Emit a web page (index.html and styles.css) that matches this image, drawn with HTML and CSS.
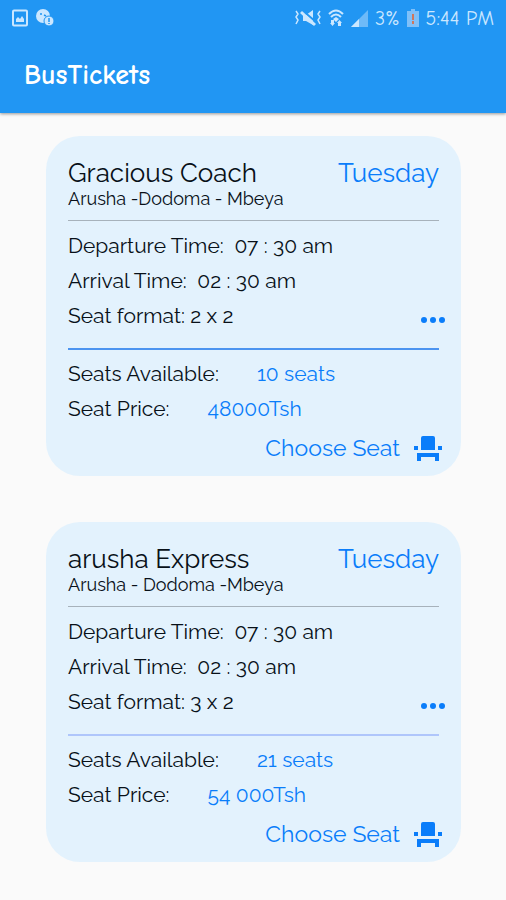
FILE: index.html
```html
<!DOCTYPE html>
<html lang="en">
<head>
<meta charset="utf-8">
<meta name="viewport" content="width=device-width, initial-scale=1">
<title>BusTickets</title>
<link rel="stylesheet" href="styles.css">
</head>
<body>
<svg width="0" height="0" class="sprite" aria-hidden="true">
  <symbol id="seat" viewBox="0 0 28 25">
    <path d="M7 2a2 2 0 0 1 2-2h10a2 2 0 0 1 2 2v12H7zM0 10h4v4H0zM24 10h4v4h-4zM3 17h22v8h-4v-4H7v4H3z"/>
  </symbol>
  <symbol id="dots" viewBox="0 0 24 6">
    <circle cx="3" cy="3" r="3"/><circle cx="12" cy="3" r="3"/><circle cx="21" cy="3" r="3"/>
  </symbol>
</svg>
<header class="app-header">
  <div class="status">
    <svg width="16" height="18" viewBox="0 0 16 18" aria-hidden="true">
      <rect x="1" y="1.500" width="14" height="15" rx="1" fill="none" stroke="currentColor" stroke-width="2"/>
      <path d="M4 13V10l2-2 2 2 2-3 2 3v3z" fill="currentColor"/>
    </svg>
    <svg width="18" height="18" viewBox="0 0 18 18" aria-hidden="true">
      <circle cx="7" cy="7" r="7" fill="currentColor"/>
      <path d="M4 5h2M8 6l2 1" stroke="#2196f3" stroke-width="1.500"/>
      <circle cx="13" cy="12" r="5" fill="currentColor" stroke="#2196f3"/>
      <path d="M13 9v4M13 14v1" stroke="#2196f3" stroke-width="1.500"/>
    </svg>
    <div class="status-right">
      <svg width="26" height="18" viewBox="0 0 26 18" aria-hidden="true">
        <path d="M8 6h3l7-5v15l-7-4H8z" fill="currentColor"/>
        <path d="M7 1l14 12" stroke="#2196f3" stroke-width="2"/>
        <path d="M6 3l14 13" stroke="currentColor" stroke-width="3"/>
        <path d="M1 2l2 3-2 3 2 3-2 4M25 2l-2 3 2 3-2 3 2 4" fill="none" stroke="currentColor" stroke-width="1.500"/>
      </svg>
      <svg width="16" height="18" viewBox="0 0 16 18" aria-hidden="true">
        <path d="M1 5q7-7 14 0M3 8q5-5 10 0" fill="none" stroke="currentColor" stroke-width="2"/>
        <path d="M8 8l3 2-3 3-3-3zM3 11h3v3h1l-2.500 3L2 14h1zM10 17v-3H9l2.500-3 2.500 3h-1v3z" fill="currentColor"/>
      </svg>
      <svg width="17" height="17" viewBox="0 0 17 17" aria-hidden="true">
        <path d="M0 17L17 0v17z" fill="currentColor" opacity=".45"/><path d="M0 17l8-8v8z" fill="currentColor"/>
      </svg>
      <span>3%</span>
      <svg width="12" height="18" viewBox="0 0 12 18" aria-hidden="true">
        <path d="M4 0h4v2h4v16H0V2h4z" fill="#80c0f8"/><path d="M6 5v6M6 12v3" stroke="#d0765c" stroke-width="2"/>
      </svg>
      <span>5:44 PM</span>
    </div>
  </div>
  <h1>BusTickets</h1>
</header>
<main>
  <article class="card">
    <div class="heading"><h2>Gracious Coach</h2><span class="day">Tuesday</span></div>
    <p class="route">Arusha -Dodoma - Mbeya</p>
    <div class="schedule">
      <p>Departure Time:&nbsp; 07 : 30 am</p>
      <p>Arrival Time:&nbsp; 02 : 30 am</p>
      <p>Seat format: 2 x 2</p>
      <button class="more" type="button" aria-label="More"><svg width="24" height="6"><use href="#dots"/></svg></button>
    </div>
    <dl>
      <div><dt>Seats Available:</dt><dd>10 seats</dd></div>
      <div><dt>Seat Price:</dt><dd>48000Tsh</dd></div>
    </dl>
    <button class="choose" type="button">Choose Seat <svg width="28" height="25" aria-hidden="true"><use href="#seat"/></svg></button>
  </article>
  <article class="card card-soft">
    <div class="heading"><h2>arusha Express</h2><span class="day">Tuesday</span></div>
    <p class="route">Arusha - Dodoma -Mbeya</p>
    <div class="schedule">
      <p>Departure Time:&nbsp; 07 : 30 am</p>
      <p>Arrival Time:&nbsp; 02 : 30 am</p>
      <p>Seat format: 3 x 2</p>
      <button class="more" type="button" aria-label="More"><svg width="24" height="6"><use href="#dots"/></svg></button>
    </div>
    <dl>
      <div><dt>Seats Available:</dt><dd>21 seats</dd></div>
      <div><dt>Seat Price:</dt><dd>54 000Tsh</dd></div>
    </dl>
    <button class="choose" type="button">Choose Seat <svg width="28" height="25" aria-hidden="true"><use href="#seat"/></svg></button>
  </article>
</main>
</body>
</html>
```
FILE: styles.css
```css
* { box-sizing: border-box; }
body {
  margin: 0;
  background: #fafafa;
  color: #081018;
  font-family: Raleway, Lato, sans-serif;
  font-size: 21px;
  line-height: 35px;
}
h1, h2, p, dl, dd { margin: 0; }
.sprite { position: absolute; }
.app-header {
  background: #2196f3;
  color: #fff;
  box-shadow: 0 1px 3px rgba(0, 0, 0, .4);
  padding-bottom: 8px;
}
.status {
  display: flex;
  align-items: center;
  gap: 8px;
  height: 36px;
  padding: 0 12px;
  color: #cbe7ff;
  font-family: "Comic Neue", Lato, sans-serif;
  font-size: 20px;
}
.status-right { display: flex; align-items: center; gap: 7px; margin-left: auto; }
h1 {
  padding: 10px 24px 0;
  font-family: "Comic Neue", Lato, sans-serif;
  font-size: 28px;
  font-weight: 700;
  line-height: 59px;
}
main { display: grid; gap: 46px; padding: 23px 45px 38px 46px; }
.card { background: #e3f2fd; border-radius: 34px; padding: 20px 22px 6px; }
.heading { display: flex; justify-content: space-between; line-height: 34px; }
h2, .day { font-size: 26px; font-weight: 400; }
.day, dd, .choose, .more { color: #0a7dfa; }
.route { font-size: 18px; line-height: 18px; padding-bottom: 12px; }
.schedule { position: relative; border-top: 1px solid #a7b2bb; padding: 7px 0 15px; }
.more { position: absolute; right: -6px; bottom: 25px; display: flex; }
dl { border-top: 2px solid #4c94f0; padding-top: 6px; }
.card-soft dl { border-top-color: #afc6fb; }
dl div { display: flex; gap: 38px; }
button { border: 0; background: none; padding: 0; font: inherit; cursor: pointer; }
svg { fill: currentColor; }
.choose {
  display: flex;
  align-items: center;
  gap: 14px;
  margin: 0 -3px 0 auto;
  font-size: 23px;
  line-height: 44px;
}
```
